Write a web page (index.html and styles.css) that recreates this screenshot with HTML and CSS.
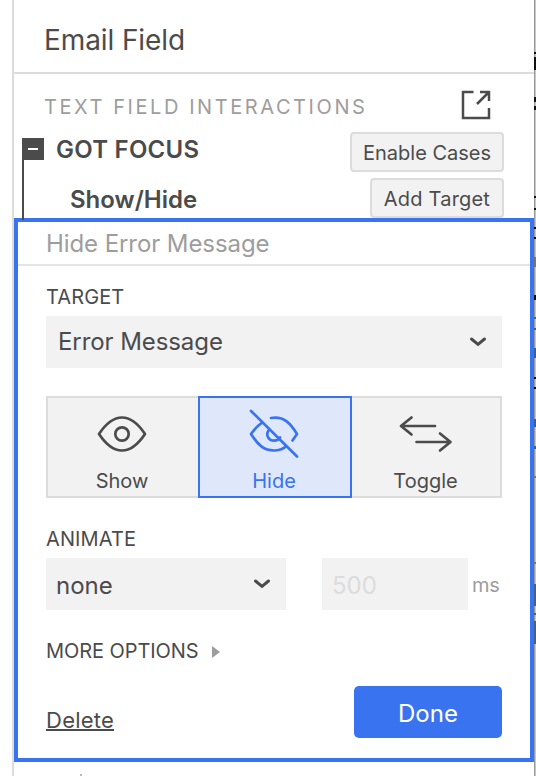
FILE: index.html
```html
<!DOCTYPE html>
<html lang="en">
<head>
    <meta charset="UTF-8">
    <meta name="viewport" content="width=device-width, initial-scale=1.0">
    <title>Interactions</title>
    <link rel="stylesheet" href="styles.css">
</head>
<body>

    <div class="panel">
        <h1 class="panel-title">Email Field</h1>

        <div class="section-head">
            <span>TEXT FIELD INTERACTIONS</span>
            <svg class="open-icon" width="30" height="30" viewBox="0 0 30 30">
                <path d="M12.500 2H2V28H28V18M19 2H28V11M28 2L16 14" />
            </svg>
        </div>

        <div class="event-row">
            <span class="collapse"></span>
            <span class="event-name">GOT FOCUS</span>
            <button class="small-button enable">Enable Cases</button>
        </div>
        <div class="action-row">
            <span class="action-name">Show/Hide</span>
            <button class="small-button add">Add Target</button>
        </div>

        <div class="editor">
            <div class="editor-title">Hide Error Message</div>

            <div class="editor-body">
                <div class="label target-label">TARGET</div>
                <div class="select">
                    <span class="target-value">Error Message</span>
                    <svg class="chevron" width="18" height="12" viewBox="0 0 18 12">
                        <path d="M2.5 3L9 8.4L15.5 3" />
                    </svg>
                </div>

                <div class="options">
                    <div class="option">
                        <svg width="60" height="56" viewBox="0 0 60 56">
                            <path d="M7 28C13 19 20 11.500 30 11.500S47 19 53 28C47 37 40 44.500 30 44.500S13 37 7 28Z" />
                            <circle cx="30" cy="28" r="6.700" />
                        </svg>
                        <span>Show</span>
                    </div>
                    <div class="option active">
                        <svg width="60" height="56" viewBox="0 0 60 56">
                            <path d="M27 12C40 9.500 47 18 53 28L48.500 34.500M17.500 17Q12 21 7 28C14 39 20 44.500 30 44.500Q37 44.500 42 40.500M24.500 24.500C21.500 29 24.500 34.700 30 34.700Q34 34.700 36 31.500M7 5L53 50.500" />
                        </svg>
                        <span>Hide</span>
                    </div>
                    <div class="option toggle">
                        <svg width="60" height="56" viewBox="0 0 60 56">
                            <path d="M39 20H5M15.500 11.500L5 20L15.500 28.500M20.500 36H54M44 27.500L54.500 36L44 44.500" />
                        </svg>
                        <span>Toggle</span>
                    </div>
                </div>

                <div class="label animate-label">ANIMATE</div>
                <div class="animate-row">
                    <div class="select animation">
                        <span class="none-text">none</span>
                        <svg class="chevron" width="18" height="12" viewBox="0 0 18 12">
                            <path d="M2.5 3L9 8.4L15.5 3" />
                        </svg>
                    </div>
                    <div class="duration">500</div>
                    <span class="unit">ms</span>
                </div>

                <div class="label more">
                    <span class="more-text">MORE OPTIONS</span>
                    <span class="triangle"></span>
                </div>

                <div class="footer">
                    <a class="delete">Delete</a>
                    <button class="done">Done</button>
                </div>
            </div>
        </div>
        <div class="next-item"></div>
    </div>

    <!-- edge of the canvas behind the panel -->
    <svg class="canvas-edge" width="2" height="776" viewBox="0 0 2 776" shape-rendering="crispEdges">
        <path fill="#c9c7c5" d="M0 0h2v776H0z" />
        <path fill="#999" d="M0 0h1v776H0z" />
        <path fill="#111" d="M0 52h2v2H0zM0 57h2v13H0zM0 97h2v5H0zM0 106h2v4H0zM0 196h2v2H0zM0 208h2v2H0zM0 227h2v2H0zM0 237h2v2H0zM0 295h2v5H0zM0 377h2v2H0zM0 387h2v2H0z" />
        <path fill="#777" d="M0 257h2v10H0zM0 476h2v2H0zM0 562h2v2H0z" />
        <path fill="#2866a8" d="M0 317h2v2H0zM0 328h2v2H0zM0 348h2v10H0zM0 419h2v8H0zM0 446h2v3H0z" />
        <path fill="#426283" d="M0 584h2v22H0zM0 613h2v2H0zM0 621h2v23H0z" />
    </svg>

</body>
</html>
```
FILE: styles.css
```css
* {
    box-sizing: border-box;
}
body {
    display: flex;
    margin: 0;
    padding-left: 12px;
    height: 776px;
    overflow: hidden;
    background-color: white;
    color: #4b4b4b;
    font-family: Inter, sans-serif;
    font-size: 24px;
    line-height: 30px;
}
button {
    font-family: inherit;
    color: inherit;
    padding: 0;
}
span, a {
    white-space: nowrap;
}
svg {
    flex-shrink: 0;
}
.panel {
    width: 522px;
    height: 776px;
    border-left: 2px solid #dcdcdc;
}
.panel-title {
    height: 74px;
    margin: 0;
    padding: 24px 0 0 30px;
    border-bottom: 2px solid #dcdcdc;
    font-size: 28px;
    font-weight: 400;
    line-height: 32px;
    letter-spacing: -0.1px;
}
.section-head {
    display: flex;
    justify-content: space-between;
    height: 58px;
    padding: 16px 43px 0 30px;
    color: #9d9d9d;
    font-size: 20px;
    line-height: 34px;
    letter-spacing: 2.57px;
}
.open-icon {
    fill: none;
    stroke: #4b4b4b;
    stroke-width: 2.5;
}
.event-row {
    display: flex;
    height: 46px;
    padding: 0 30px 0 8px;
}
.collapse {
    position: relative;
    width: 22px;
    height: 22px;
    margin: 6px 12px 0 0;
    background-color: #4b4b4b;
}
.collapse::before {
    content: "";
    position: absolute;
    left: 6px;
    top: 10px;
    width: 10px;
    height: 2px;
    background-color: white;
}
.collapse::after {
    content: "";
    position: absolute;
    z-index: 1;
    left: 0;
    top: 22px;
    width: 2px;
    height: 60px;
    background-color: #4b4b4b;
}
.event-name, .action-name {
    font-weight: 600;
    line-height: 36px;
}
.event-name {
    letter-spacing: 0.25px;
}
.small-button {
    height: 40px;
    margin-left: auto;
    padding-top: 2px;
    border: 2px solid #dcdcdc;
    border-radius: 4px;
    background-color: #f2f2f2;
    font-size: 20px;
    line-height: 34px;
}
.enable { width: 154px; }
.add {
    width: 134px;
    letter-spacing: 0.2px;
}
.action-row {
    display: flex;
    height: 40px;
    padding: 0 30px 0 56px;
}
.action-name {
    line-height: 44px;
}
.editor {
    height: 544px;
    border: 4px solid #3a73f0;
}
.editor-title {
    height: 44px;
    padding: 7px 0 0 28px;
    border-bottom: 2px solid #e4e4e4;
    color: #9d9d9d;
    letter-spacing: -0.08px;
}
.editor-body {
    display: flex;
    flex-direction: column;
    padding: 16px 28px 0;
}
.label {
    font-size: 20px;
    line-height: 30px;
}
.target-label {
    height: 34px;
    letter-spacing: 0.1px;
}
.target-value {
    letter-spacing: -0.08px;
}
.select {
    display: flex;
    align-items: center;
    justify-content: space-between;
    height: 52px;
    padding: 0 15px 0 12px;
    background-color: #f2f2f2;
}
.chevron {
    fill: none;
    stroke: #4b4b4b;
    stroke-width: 3;
    stroke-linecap: round;
}
.options {
    display: grid;
    grid-template-columns: 152px 154px 150px;
    height: 102px;
    margin-top: 28px;
}
.option {
    display: flex;
    flex-direction: column;
    align-items: center;
    padding: 8px 2px 0 0;
    border: 2px solid #dcdcdc;
    border-right: none;
    background-color: #f2f2f2;
    font-size: 20px;
}
.option svg {
    fill: none;
    stroke: #4b4b4b;
    stroke-width: 2.7;
    stroke-linecap: round;
    stroke-linejoin: round;
}
.option span {
    margin-top: 4px;
    line-height: 30px;
}
.option.toggle {
    padding-right: 1px;
    border-left: none;
    border-right: 2px solid #dcdcdc;
}
.option.active {
    border: 2px solid #3a73f0;
    background-color: #dfe8fb;
    color: #3a73f0;
}
.option.active svg {
    stroke: #3a73f0;
}
.animate-label {
    height: 34px;
    margin-top: 26px;
    letter-spacing: 0.1px;
}
.animate-row {
    display: flex;
    height: 52px;
}
.animation {
    width: 240px;
    padding-left: 10px;
}
.none-text {
    padding-top: 3px;
}
.duration {
    width: 146px;
    margin-left: 36px;
    padding-left: 10px;
    background-color: #f2f2f2;
    color: #dcdcdc;
    line-height: 56px;
}
.unit {
    margin-left: 4px;
    color: #9d9d9d;
    font-size: 20px;
    line-height: 54px;
    letter-spacing: -0.3px;
}
.more {
    display: flex;
    align-items: center;
    gap: 14px;
    height: 30px;
    margin-top: 26px;
    letter-spacing: -0.08px;
}
.triangle {
    margin-top: 2px;
    border-left: 8px solid #9d9d9d;
    border-top: 6px solid transparent;
    border-bottom: 6px solid transparent;
}
.more-text { width: 152px; }
.footer {
    display: flex;
    justify-content: space-between;
    margin-top: 20px;
}
.delete {
    margin-top: 19px;
    height: 26px;
    border-bottom: 2px solid #4b4b4b;
    font-size: 22px;
    letter-spacing: 0.25px;
}
.done {
    width: 148px;
    height: 52px;
    padding-top: 4px;
    border: none;
    border-radius: 5px;
    background-color: #3a73f0;
    color: white;
    font-size: 24px;
    line-height: 48px;
}
.next-item {
    width: 2px;
    height: 2px;
    margin: 12px 0 0 66px;
    background-color: #bbb;
}
```
